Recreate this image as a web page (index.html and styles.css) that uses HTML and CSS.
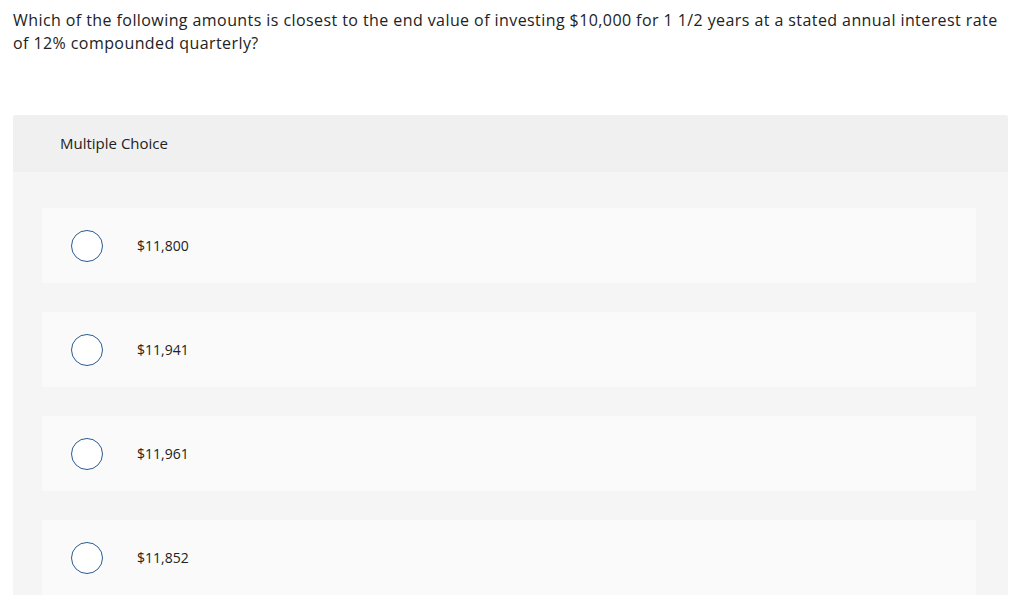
FILE: index.html
```
<!DOCTYPE html>
<html>
<head>
<meta charset="utf-8">
<link rel="stylesheet" href="styles.css">
</head>
<body>
<div class="question">Which of the following amounts is closest to the end value of investing $10,000 for 1 1/2 years at a stated annual interest rate of 12% compounded quarterly?</div>
<div class="box">
  <div class="box-head">Multiple Choice</div>
  <div class="options">
    <div class="option"><span class="radio"></span><span class="label">$11,800</span></div>
    <div class="option"><span class="radio"></span><span class="label">$11,941</span></div>
    <div class="option"><span class="radio"></span><span class="label">$11,961</span></div>
    <div class="option"><span class="radio"></span><span class="label">$11,852</span></div>
  </div>
</div>
</body>
</html>
```
FILE: styles.css
```
html, body { margin: 0; padding: 0; background: #fff; }
body {
  font-family: "Open Sans", Lato, sans-serif;
  color: #222;
  width: 1024px;
  overflow: hidden;
}
.question {
  padding: 9px 20px 0 13px;
  font-size: 16px;
  letter-spacing: 0.42px;
  line-height: 23px;
  height: 115px;
  box-sizing: border-box;
}
.box {
  margin-left: 13px;
  width: 995px;
  background: #f5f5f5;
  border-radius: 3px 3px 0 0;
}
.box-head {
  height: 57px;
  background: #f0f0f0;
  border-radius: 3px 3px 0 0;
  padding-left: 47px;
  padding-bottom: 2px;
  box-sizing: border-box;
  display: flex;
  align-items: center;
  font-size: 15px;
}
.options {
  padding: 36px 0 0 29px;
  display: flex;
  flex-direction: column;
  gap: 29px;
}
.option {
  width: 934px;
  height: 75px;
  background: #fafafa;
  border-radius: 3px;
  display: flex;
  align-items: center;
}
.radio {
  width: 30px;
  height: 30px;
  border: 1px solid #2c5a94;
  border-radius: 50%;
  background: #fff;
  margin-left: 29px;
  flex: none;
}
.label {
  margin-left: 34px;
  font-size: 14px;
}
```
